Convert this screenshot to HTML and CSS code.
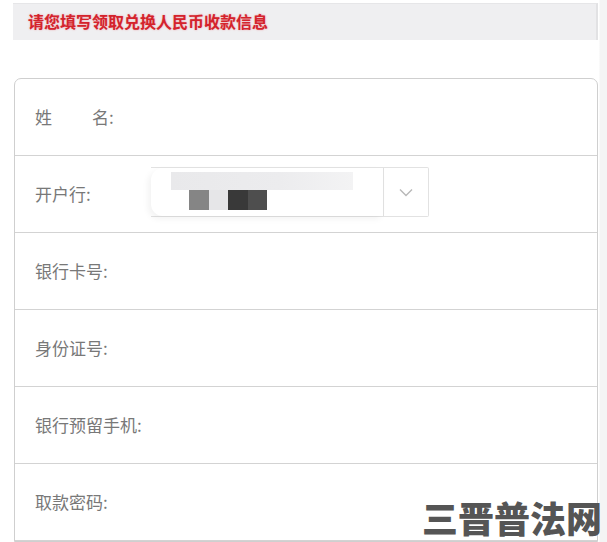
FILE: index.html
```html
<!DOCTYPE html>
<html lang="zh-CN">
<head>
    <meta charset="UTF-8">
    <meta name="viewport" content="width=device-width, initial-scale=1.0">
    <title>收款信息</title>
    <link rel="stylesheet" href="styles.css">
</head>
<body>
    <div class="page">
        <div class="notice">请您填写领取兑换人民币收款信息</div>

        <div class="form-card">
            <div class="form-row">
                <span class="label"><span class="gap">姓</span>名:</span>
            </div>
            <div class="form-row">
                <span class="label">开户行:</span>
                <div class="select">
                    <div class="select-value">
                        <div class="blur-bar"></div>
                        <div class="blocks">
                            <span class="b1"></span><span class="b2"></span><span class="b3"></span><span class="b4"></span>
                        </div>
                    </div>
                    <div class="select-arrow">
                        <svg width="14" height="9" viewBox="0 0 14 9"><path d="M1 1.5 L7 7.5 L13 1.5" fill="none" stroke="#b8b8b8" stroke-width="1.4"/></svg>
                    </div>
                </div>
            </div>
            <div class="form-row">
                <span class="label">银行卡号:</span>
            </div>
            <div class="form-row">
                <span class="label">身份证号:</span>
            </div>
            <div class="form-row">
                <span class="label">银行预留手机:</span>
            </div>
            <div class="form-row">
                <span class="label">取款密码:</span>
            </div>
        </div>

        <!-- watermark -->
        <div class="watermark">三晋普法网</div>
    </div>
</body>
</html>
```

FILE: styles.css
```css
body {
    margin: 0;
    background: #fff;
    font-family: "Noto Sans CJK SC", "Liberation Sans", sans-serif;
}
.page {
    position: relative;
    width: 607px;
    height: 542px;
    overflow: hidden;
    padding-top: 3px;
    box-sizing: border-box;
    background: linear-gradient(to right, #fff 0, #fff 599px, #f4f4f4 600px);
}
.notice {
    margin: 0 9px 0 13px;
    height: 37px;
    box-sizing: border-box;
    padding-left: 15px;
    background: #efeff1;
    border-top: 1px solid #e6e6e8;
    border-right: 2px solid #e2e2e4;
    color: #d4232c;
    font-size: 16px;
    font-weight: bold;
    line-height: 35px;
    text-shadow: 0 0 2px rgba(230, 60, 70, 0.45);
}
.form-card {
    margin: 38px 9px 0 14px;
    border: 1px solid #cfcfcf;
    border-radius: 7px 7px 0 0;
    background: #fff;
}
.form-row {
    display: flex;
    align-items: center;
    height: 76px;
    padding-left: 20px;
    border-bottom: 1px solid #d3d3d3;
}
.label {
    width: 116px;
    flex-shrink: 0;
    margin-top: -2px;
    color: #787878;
    font-size: 17px;
}
.gap {
    display: inline-block;
    width: 57px;
}
.select {
    display: flex;
    width: 278px;
    height: 50px;
    margin-top: -4px;
    border: 1px solid #e2e2e2;
    border-left: none;
    border-radius: 0 2px 2px 0;
    box-sizing: border-box;
    box-shadow: -6px 4px 10px rgba(255, 255, 255, 0.9);
}
.select-value {
    flex: 1;
    padding: 4px 0 0 20px;
    border-radius: 12px 0 0 12px;
    box-shadow: -3px 3px 6px rgba(0, 0, 0, 0.05);
}
.blur-bar {
    width: 182px;
    height: 18px;
    background: linear-gradient(to right, #e9e9eb, #ececee 60%, #f3f3f4);
}
.blocks {
    display: flex;
    height: 20px;
    margin-left: 18px;
}
.blocks span { width: 20px; height: 20px; }
.b1 { background: #858585; }
.b2 { background: #e6e6e8; width: 19px !important; }
.b3 { background: #393939; }
.b4 { background: #4e4e4e; width: 19px !important; }
.select-arrow {
    width: 44px;
    border-left: 1px solid #e0e0e0;
    display: flex;
    align-items: center;
    justify-content: center;
}
.watermark {
    position: absolute;
    left: 422px;
    top: 495px;
    color: #555;
    font-size: 36px;
    font-weight: 900;
    line-height: 44px;
    white-space: nowrap;
    text-shadow: 0 0 2px rgba(255, 255, 255, 0.8);
}
```
